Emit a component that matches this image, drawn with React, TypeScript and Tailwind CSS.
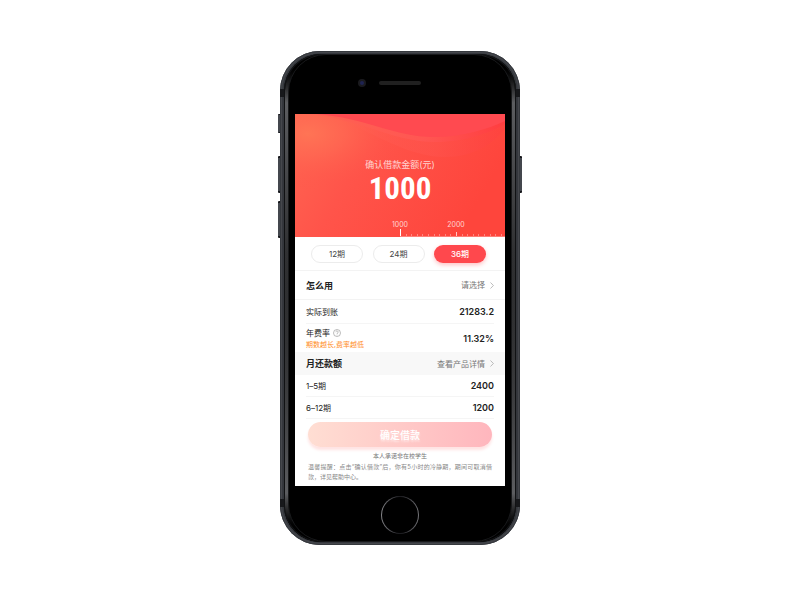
import { useState } from "react";
import type { ReactNode } from "react";

const TERMS = ["12期", "24期", "36期"];

const TICKS = Array.from({ length: 10 }, (_, i) => i);

function Chevron() {
  return (
    <svg viewBox="0 0 4 7" className="h-[7px] w-1" fill="none" stroke="#a9a9a9" strokeWidth="0.8">
      <path d="M0.5 0.5 L3.4 3.5 L0.5 6.5" />
    </svg>
  );
}

function HelpIcon() {
  return (
    <svg viewBox="0 0 16 16" className="size-2" fill="none" stroke="#8f8f8f" strokeWidth="1.2">
      <circle cx="8" cy="8" r="7" />
      <path d="M5.6 6.4 C5.6 3.2 10.4 3.2 10.4 6.2 C10.4 8 8 8 8 10" />
      <path d="M8 11.3 V12.6" />
    </svg>
  );
}

function Waves() {
  return (
    <svg
      viewBox="0 0 209 123"
      preserveAspectRatio="none"
      className="absolute inset-0 h-full w-full"
      aria-hidden="true"
    >
      <defs>
        <linearGradient id="base" x1="0" y1="0" x2="1" y2="0.35">
          <stop offset="0" stopColor="#ff6652" />
          <stop offset="0.4" stopColor="#ff544a" />
          <stop offset="1" stopColor="#fe453c" />
        </linearGradient>
        <radialGradient id="glow" cx="0.06" cy="0.16" r="0.45">
          <stop offset="0" stopColor="#ff7455" />
          <stop offset="0.4" stopColor="#ff6b53" stopOpacity="0.6" />
          <stop offset="1" stopColor="#ff5549" stopOpacity="0" />
        </radialGradient>
        <linearGradient id="band" x1="0" y1="0" x2="1" y2="0">
          <stop offset="0" stopColor="#ff6352" />
          <stop offset="0.6" stopColor="#ff5753" />
          <stop offset="1" stopColor="#ff3d40" />
        </linearGradient>
      </defs>
      <rect width="209" height="123" fill="url(#base)" />
      <rect width="209" height="123" fill="url(#glow)" />
      <path d="M30 0 C80 18 110 43 150 43 C180 43 198 28 209 15 V0 Z" fill="url(#band)" opacity="0.35" />
      <path d="M8 0 C60 2 95 28 140 28 C170 28 195 18 209 10 V0 Z" fill="url(#band)" opacity="0.9" />
      <path d="M22 0 C70 4 100 23 138 23 C168 23 192 15 209 7 V0 Z" fill="#ff4a50" />
    </svg>
  );
}

function RulerStep({ first }: { first?: boolean }) {
  return (
    <div className="grid w-14 shrink-0 grid-cols-10 items-end">
      {TICKS.map((t) => (
        <i
          key={t}
          className={
            t > 0
              ? "h-[2px] w-px bg-white/35"
              : first
                ? "h-[7px] w-px bg-white"
                : "h-1 w-px bg-white/70"
          }
        />
      ))}
    </div>
  );
}

function Row({ label, value }: { label: ReactNode; value: string }) {
  return (
    <div className="mx-[11px] flex h-[22px] items-center justify-between border-b border-[#f5f5f5]">
      <dt className="text-[8px] text-[#222]">{label}</dt>
      <dd className="text-[9px] font-semibold text-[#222]">{value}</dd>
    </div>
  );
}

function LoanScreen() {
  const [term, setTerm] = useState("36期");

  return (
    <main className="flex flex-col overflow-hidden bg-white leading-none">
      <header className="relative flex h-[123px] flex-col items-center overflow-hidden pt-[45px] text-white">
        <Waves />
        <h1 className="relative text-[9px] leading-[11px] font-normal text-white/75">确认借款金额(元)</h1>
        <p className="relative mt-[2px] font-['Roboto_Condensed','Roboto',sans-serif] text-[31px] leading-[34px] font-bold">
          1000
        </p>
        <div className="relative mt-auto w-full pl-[105px] text-white/75">
          <div className="flex text-[7px] leading-[8px]">
            <span className="-ml-5 w-10 shrink-0 text-center">1000</span>
            <span className="ml-4 w-10 shrink-0 text-center">2000</span>
          </div>
          <div className="flex h-2 items-end overflow-hidden border-b border-white/30">
            <RulerStep first />
            <RulerStep />
          </div>
        </div>
      </header>

      <div className="flex h-[34px] items-center justify-between border-b border-[#f3f3f3] pr-[19px] pl-4">
        {TERMS.map((t) => (
          <button
            key={t}
            type="button"
            aria-pressed={t === term}
            onClick={() => setTerm(t)}
            className={
              t === term
                ? "h-[18px] w-[52px] rounded-full bg-[#ff484d] text-[8px] font-medium text-white shadow-[0_2px_4px_#ff484d55]"
                : "h-[18px] w-[52px] rounded-full border border-[#ececec] text-[8px] text-[#444]"
            }
          >
            {t}
          </button>
        ))}
      </div>

      <button
        type="button"
        className="flex h-[29px] items-center justify-between border-b border-[#f3f3f3] px-[11px]"
      >
        <span className="text-[9px] font-bold text-[#222]">怎么用</span>
        <span className="flex items-center gap-[5px] text-[8px] text-[#777]">
          请选择
          <Chevron />
        </span>
      </button>

      <dl>
        <div className="mx-[11px] flex h-6 items-center justify-between border-b border-[#f5f5f5]">
          <dt className="text-[8px] text-[#222]">实际到账</dt>
          <dd className="text-[9px] font-semibold text-[#222]">21283.2</dd>
        </div>
        <div className="flex h-7 items-center justify-between px-[11px]">
          <dt className="pt-px text-[8px] text-[#222]">
            <span className="flex items-center gap-[3px] leading-[11px]">
              年费率
              <HelpIcon />
            </span>
            <span className="block text-[7px] leading-[11px] text-[#ff8c26]">期数越长,费率越低</span>
          </dt>
          <dd className="text-[9px] font-semibold text-[#222]">11.32%</dd>
        </div>
      </dl>

      <div className="flex h-[23px] items-center justify-between bg-[#f8f8f8] px-[11px]">
        <h2 className="text-[9px] font-bold text-[#222]">月还款额</h2>
        <a href="#detail" className="flex items-center gap-[5px] text-[8px] text-[#777]">
          查看产品详情
          <Chevron />
        </a>
      </div>

      <dl>
        <Row label="1–5期" value="2400" />
        <Row label="6–12期" value="1200" />
      </dl>

      <div className="px-[13px] pt-[3px]">
        <button
          type="button"
          className="h-[25px] w-full rounded-full bg-linear-to-r from-[#ffded3] to-[#ffb6bd] text-[10px] font-medium text-white shadow-[0_3px_3px_#ffe3e3] [text-shadow:0_2px_2px_#ffffff88]"
        >
          确定借款
        </button>
        <p className="mt-[5px] text-center text-[6px] leading-[8px] text-[#777]">本人承诺非在校学生</p>
        <p className="mt-[2px] pb-1 text-justify text-[6px] leading-[10px] text-[#888]">
          温馨提醒：点击“确认借款”后，你有5小时的冷静期，期间可取消借款，详见帮助中心。
        </p>
      </div>
    </main>
  );
}

export default function App() {
  return (
    <div className="flex min-h-screen items-center justify-center bg-white pb-1 font-['Inter','Noto_Sans_CJK_SC',sans-serif]">
      <div className="relative w-[240px]">
        <i className="absolute top-[63px] -left-[2px] h-[19px] w-1 rounded-l-[1px] border-y border-[#17181c] bg-[#44474d]" />
        <i className="absolute top-[105px] -left-[2px] h-[37px] w-1 rounded-l-[1px] border-y-2 border-[#17181c] bg-[#44474d]" />
        <i className="absolute top-[150px] -left-[2px] h-[37px] w-1 rounded-l-[1px] border-y-2 border-[#17181c] bg-[#44474d]" />
        <i className="absolute top-[105px] -right-[2px] h-[37px] w-1 rounded-r-[1px] border-y-2 border-[#17181c] bg-[#44474d]" />

        <div className="relative rounded-[40px] bg-[#33363b] px-1 py-[3px] shadow-[inset_0_0_0_1px_#36393e,inset_0_0_1px_2px_#484a4f]">
          <i className="absolute top-[38px] left-0 h-2 w-1 bg-[#17181b]" />
          <i className="absolute top-[38px] right-0 h-2 w-1 bg-[#17181b]" />
          <i className="absolute bottom-[38px] left-0 h-2 w-1 bg-[#17181b]" />
          <i className="absolute right-0 bottom-[38px] h-2 w-1 bg-[#17181b]" />
          <div className="rounded-[37px] bg-linear-to-b from-black from-2% via-[#5c5d60] via-10% to-black to-98% shadow-[inset_0_0_0_1px_#111214]">
            <div className="rounded-[37px] bg-linear-to-t from-black from-2% via-[#5c5d60] via-10% to-transparent to-60% px-1 shadow-[inset_0_0_0_1px_#111214]">
              <div className="rounded-[38px] border border-[#18191b] bg-black px-[6px] py-[2px]">
                <div className="flex h-[57px] items-center pb-[5px]">
                  <div className="flex w-full items-center pl-[63px]">
                    <span className="flex size-2 items-center justify-center rounded-full bg-[#1a1a1e]">
                      <i className="size-1 rounded-full bg-[#1e2352]" />
                    </span>
                    <span className="ml-[13px] h-1 w-[42px] rounded-full bg-[#202020]" />
                  </div>
                </div>
                <LoanScreen />
                <div className="flex h-[53px] items-center justify-center pt-[5px]">
                  <button
                    type="button"
                    aria-label="Home"
                    className="size-[38px] rounded-full bg-linear-to-r from-[#8a8a8e] via-[#1c1c20] to-[#77777b] p-px"
                  >
                    <span className="block size-full rounded-full bg-black" />
                  </button>
                </div>
              </div>
            </div>
          </div>
        </div>
      </div>
    </div>
  );
}
